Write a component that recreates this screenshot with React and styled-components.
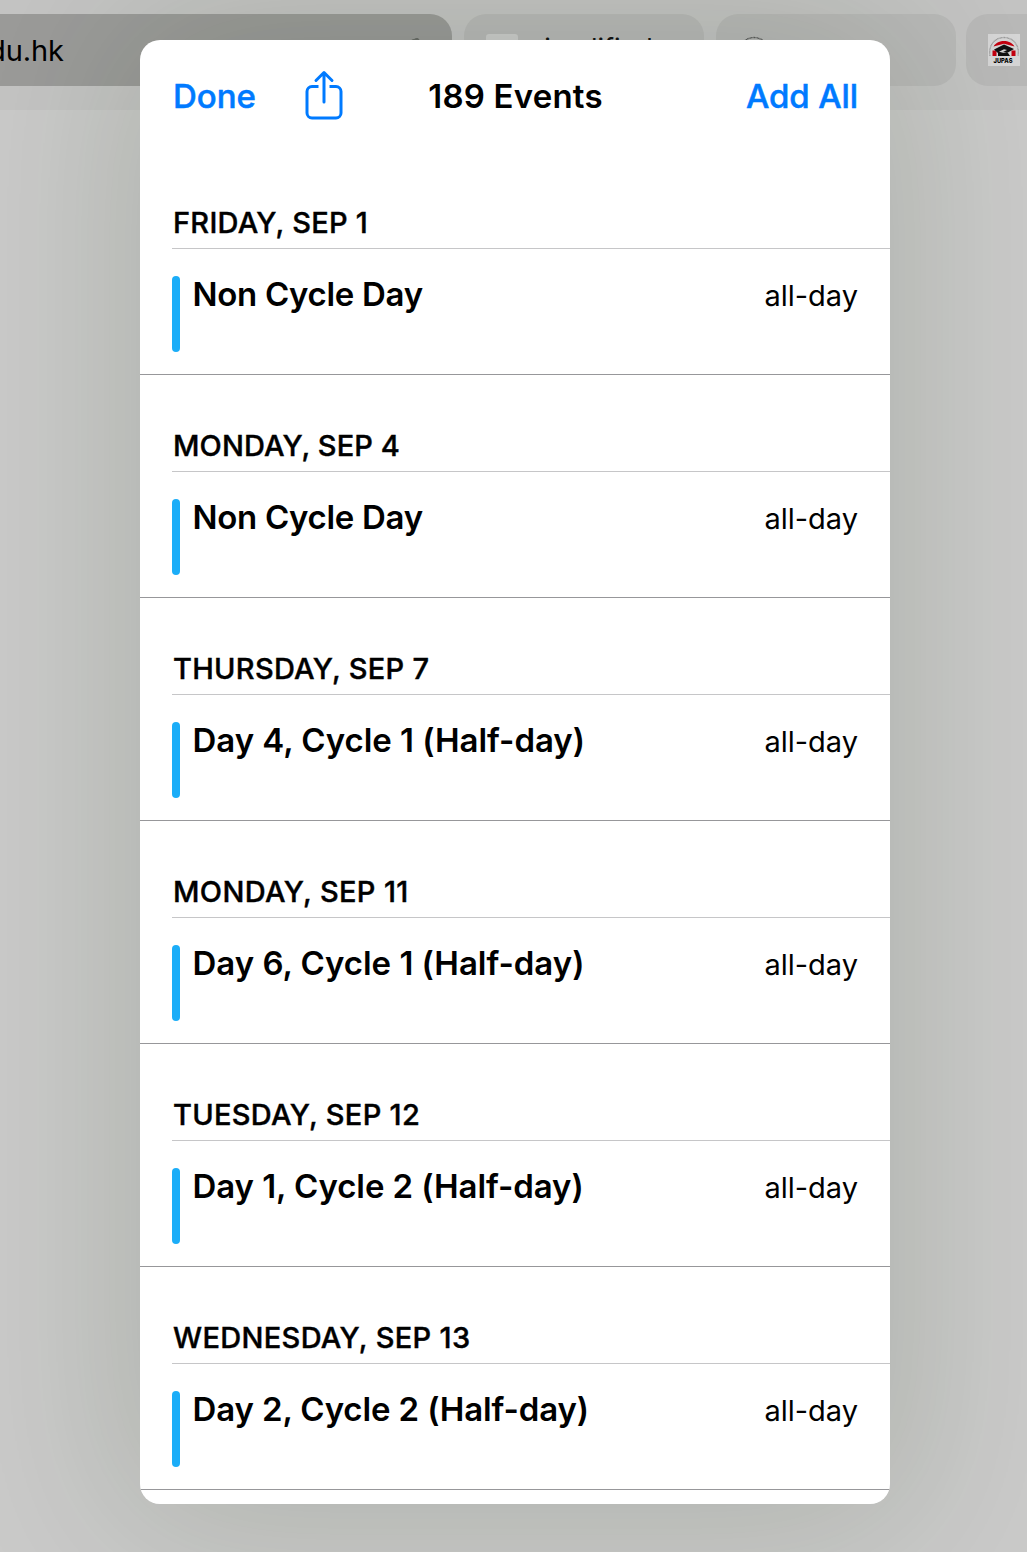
import React from "react";
import styled, { createGlobalStyle } from "styled-components";

const Global = createGlobalStyle`
  * { box-sizing: border-box; }
  body { margin: 0; overflow: hidden; background: #cacac9; }
`;

const Page = styled.div`
  position: relative;
  height: 1552px;
  width: 1027px;
  overflow: hidden;
  background: #cacac9;
  font-family: Inter, "Liberation Sans", sans-serif;
  color: #000;
`;

const TabBar = styled.header`
  display: flex;
  height: 110px;
  padding-top: 14px;
  background: #c4c4c3;
`;

const Tab = styled.div`
  flex: none;
  display: flex;
  align-items: center;
  gap: ${(p) => p.$inner ?? 12}px;
  width: ${(p) => p.$width}px;
  height: 72px;
  margin-right: ${(p) => p.$gap ?? 12}px;
  padding: 0 0 0 22px;
  overflow: hidden;
  border-radius: 22px;
  background: #b9b9b8;
  white-space: nowrap;
`;

const AddressTab = styled(Tab)`
  justify-content: space-between;
  padding: 0 23px 0 0;
  border-radius: 0 22px 22px 0;
  background: #9b9b99;
`;

const Address = styled.span`
  margin-left: -12px;
  padding-top: 1px;
  font-size: 29px;
  letter-spacing: -0.1px;
`;

const Favicon = styled.span`
  flex: none;
  width: 32px;
  height: 32px;
  border-radius: 3px;
  background: #cdcdcc;
`;

const JupasIcon = styled.svg`
  flex: none;
  width: 32px;
  height: 32px;
  background: ${(p) => (p.$plain ? "none" : "#d6d6d6")};
`;

const TabTitle = styled.span`
  flex: 1;
  padding-bottom: ${(p) => (p.$muted ? 0 : 3)}px;
  font-size: ${(p) => (p.$muted ? 25 : 27)}px;
  line-height: 32px;
  color: ${(p) => (p.$muted ? "#555" : "#111")};
`;

const ReloadIcon = styled.svg`
  flex: none;
  width: 24px;
  height: 24px;
  stroke: #6b6d69;
  stroke-width: 2;
  fill: none;
`;

const Sheet = styled.main`
  position: absolute;
  left: 140px;
  top: 40px;
  width: 750px;
  height: 1464px;
  overflow: hidden;
  border-radius: 20px;
  background: #fff;
`;

const SheetShadow = styled.div`
  position: absolute;
  left: 140px;
  top: 40px;
  width: 750px;
  height: 1464px;
  border-radius: 20px;
  box-shadow: 0 0 170px 14px rgba(20, 45, 15, 0.155);
`;

const Toolbar = styled.div`
  display: grid;
  grid-template-columns: 1fr auto 1fr;
  align-items: center;
  height: 112px;
  padding: 0 32px 0 33px;
`;

const Actions = styled.div`
  display: flex;
  align-items: center;
  gap: 48px;
`;

const Action = styled.button`
  padding: 0;
  border: 0;
  background: none;
  color: #007aff;
  font: 500 33px/42px Inter, sans-serif;
  letter-spacing: ${(p) => p.$tracking}px;
  justify-self: ${(p) => p.$align ?? "start"};
  -webkit-text-stroke: 0.5px #007aff;
`;

const ShareIcon = styled.svg`
  width: 40px;
  height: 50px;
  margin-top: -2px;
`;

const Title = styled.h1`
  margin: 0;
  font-size: 33px;
  font-weight: 600;
  line-height: 42px;
  letter-spacing: 0.2px;
`;

const EventList = styled.div`
  padding-top: 0;
`;

const Section = styled.section`
  height: 223px;
  border-bottom: 1px solid #97979a;
`;

const DateHeading = styled.h2`
  display: flex;
  align-items: flex-end;
  height: 97px;
  margin: 0 0 0 32px;
  padding: 0 0 7px 1px;
  border-bottom: 1px solid #c6c6c8;
  font-size: 29px;
  font-weight: 500;
  line-height: 36px;
  letter-spacing: ${(p) => p.$tracking}px;
  -webkit-text-stroke: 0.4px #000;
`;

const EventRow = styled.div`
  display: flex;
  align-items: flex-start;
  padding: 27px 32px 0;
`;

const Marker = styled.span`
  width: 8px;
  height: 76px;
  border-radius: 4px;
  background: #1badf8;
`;

const EventName = styled.span`
  flex: 1;
  margin-left: 12.500px;
  font-size: 33px;
  font-weight: 600;
  line-height: 37px;
  letter-spacing: ${(p) => p.$tracking}px;
`;

const Time = styled.span`
  font-size: 29px;
  line-height: 40px;
`;

const events = [
  { date: "FRIDAY, SEP 1", name: "Non Cycle Day", dt: 0.25, nt: -0.3 },
  { date: "MONDAY, SEP 4", name: "Non Cycle Day", dt: 0.1, nt: -0.3 },
  { date: "THURSDAY, SEP 7", name: "Day 4, Cycle 1 (Half-day)", dt: 0.28, nt: -0.03 },
  { date: "MONDAY, SEP 11", name: "Day 6, Cycle 1 (Half-day)", dt: 0.36, nt: -0.02 },
  { date: "TUESDAY, SEP 12", name: "Day 1, Cycle 2 (Half-day)", dt: 0.31, nt: -0.07 },
  { date: "WEDNESDAY, SEP 13", name: "Day 2, Cycle 2 (Half-day)", dt: 0.33, nt: -0.12 },
];

function Jupas({ plain }) {
  return (
    <JupasIcon viewBox="0 0 32 32" $plain={plain}>
      <path d="M2 22C0 10 8 3.500 16 3.500s16 6.500 14 18.500" fill="none" stroke={plain ? "#555" : "#999"} strokeWidth="1.300" strokeDasharray="1 .4" />
      <path d="M5.500 12.500C8 8.500 12 7 16 7s8 1.500 10.500 5.500L16 9.700Z" fill="#c4000f" />
      <path d="M4.500 16.500h4V22h-4zM23.500 16.500h4V22h-4z" fill="#c4000f" />
      <path d="M6 15.500 16 10.500l10 4.500-7 4-4-1 4-2-3-.8-5 2.500 5 1.300h4l2 3H10v-3z" fill="#111" />
      <text x="5.500" y="29" fontFamily="Inter, sans-serif" fontWeight="800" fontSize="6.500" textLength="19" lengthAdjust="spacingAndGlyphs">JUPAS</text>
    </JupasIcon>
  );
}

function Reload() {
  return (
    <ReloadIcon viewBox="0 0 24 24">
      <path d="M12 1.500A10.500 10.500 0 1 0 22.500 12" />
      <path d="M8 -3 13 1.500 8 6" />
    </ReloadIcon>
  );
}

export default function App() {
  return (
    <Page>
      <Global />
      <TabBar>
        <AddressTab $width={452}><Address>du.hk</Address><Reload /></AddressTab>
        <Tab $width={240}><Favicon /><TabTitle>simplified</TabTitle></Tab>
        <Tab $width={240} $gap={10} $inner={22}><Jupas plain /><TabTitle $muted>JUPAS</TabTitle></Tab>
        <Tab $width={240}><Jupas /></Tab>
      </TabBar>
      <SheetShadow />
      <Sheet>
        <Toolbar>
          <Actions>
            <Action $tracking={0}>Done</Action>
            <ShareIcon viewBox="0 0 40 50" fill="none" stroke="#007aff" strokeWidth="3" strokeLinecap="round" strokeLinejoin="round">
              <path d="M14.500 16.500H8a5 5 0 0 0-5 5V43a5 5 0 0 0 5 5h24a5 5 0 0 0 5-5V21.500a5 5 0 0 0-5-5h-6.500" strokeLinecap="butt" />
              <path d="M20 32V3M12 10.500 20 2.500l8 8" />
            </ShareIcon>
          </Actions>
          <Title>189 Events</Title>
          <Action $align="end" $tracking={-0.1}>Add All</Action>
        </Toolbar>
        <EventList>
          {events.map((e) => (
            <Section key={e.date}>
              <DateHeading $tracking={e.dt}>{e.date}</DateHeading>
              <EventRow>
                <Marker />
                <EventName $tracking={e.nt}>{e.name}</EventName>
                <Time>all-day</Time>
              </EventRow>
            </Section>
          ))}
        </EventList>
      </Sheet>
    </Page>
  );
}
